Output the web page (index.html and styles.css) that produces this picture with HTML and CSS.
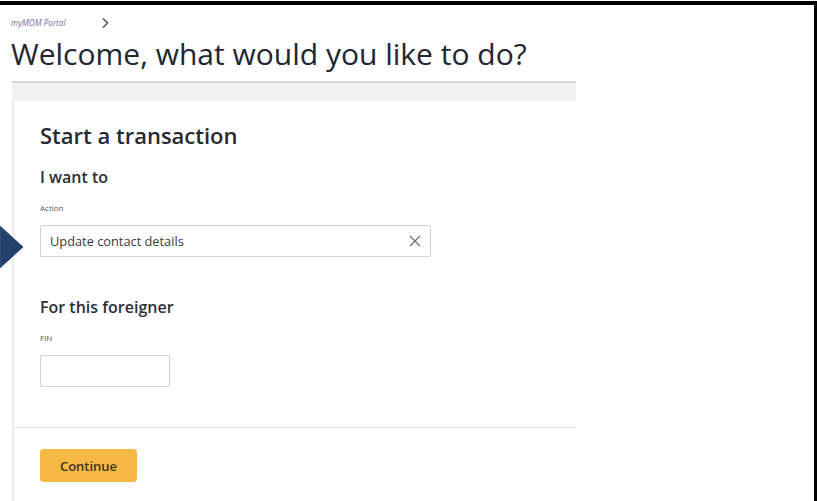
FILE: index.html
```html
<!DOCTYPE html>
<html lang="en">
<head>
<meta charset="utf-8">
<title>myMOM Portal</title>
<link rel="stylesheet" href="styles.css">
</head>
<body>
<div class="frame">
  <nav class="crumbs">
    <span class="crumb">myMOM Portal</span>
    <svg class="crumb-sep" width="8" height="12" viewBox="0 0 8 12"><path d="M2 1.5 L6.5 6 L2 10.5" fill="none" stroke="#444" stroke-width="1.3"/></svg>
  </nav>
  <h1 class="title">Welcome, what would you like to do?</h1>

  <section class="panel">
    <div class="card">
      <div class="card-body">
        <h2 class="card-title">Start a transaction</h2>

        <h3 class="group-title">I want to</h3>
        <label class="field-label">Action</label>
        <div class="select">
          <span class="select-value">Update contact details</span>
          <svg class="clear" width="12" height="12" viewBox="0 0 12 12"><path d="M1 1 L11 11 M11 1 L1 11" stroke="#6f6f6f" stroke-width="1.3"/></svg>
        </div>

        <h3 class="group-title group-gap">For this foreigner</h3>
        <label class="field-label">FIN</label>
        <div class="text-input"></div>
      </div>
      <div class="card-foot">
        <button class="btn-primary">Continue</button>
      </div>
    </div>
  </section>

  <svg class="pointer" width="24" height="46" viewBox="0 0 24 46"><polygon points="0,0 23,21 0,42" fill="#23406b" stroke="#3a5a88" stroke-width="1"/></svg>
</div>
</body>
</html>
```

FILE: styles.css
```css
* { box-sizing: border-box; }

html, body {
  margin: 0;
  padding: 0;
  background: #ffffff;
}

body {
  font-family: "Open Sans", "Noto Sans", sans-serif;
  color: #2b2b2b;
  padding-top: 1px;
  width: 817px;
  height: 501px;
  overflow: hidden;
}

.frame {
  position: relative;
  height: 500px;
  border-top: 4px solid #000;
  border-right: 3px solid #000;
  padding-left: 11px;
}

.crumbs {
  display: flex;
  align-items: center;
  gap: 35px;
  margin-top: 12px;
  height: 12px;
}

.crumb {
  font-size: 8.2px;
  font-style: italic;
  color: #7b6aa3;
  line-height: 12px;
}

.title {
  margin: 7px 0 9px;
  font-size: 30px;
  line-height: 36px;
  font-weight: 400;
  color: #212630;
}

.panel {
  margin-left: 1px;
  width: 564px;
  border-top: 2px solid #d8d8d8;
  background: #f2f2f2;
  padding-top: 18px;
}

.card {
  margin-left: 1px;
  background: #fff;
  border-left: 1px solid #e6e6e6;
  height: 400px;
}

.card-body {
  padding: 20px 26px 40px;
  border-bottom: 1px solid #dfe3ea;
}

.card-title {
  margin: 0;
  font-size: 22px;
  line-height: 28px;
  font-weight: 600;
  color: #262a30;
}

.group-title {
  margin: 18px 0 0;
  font-size: 16px;
  line-height: 20px;
  font-weight: 600;
  color: #2b2f35;
}

.group-gap { margin-top: 40px; }

.field-label {
  display: block;
  margin-top: 15px;
  font-size: 8px;
  line-height: 12px;
  color: #555;
}

.select {
  margin-top: 11px;
  width: 391px;
  height: 32px;
  border: 1px solid #d3d3d3;
  border-radius: 2px;
  display: flex;
  align-items: center;
  justify-content: space-between;
  padding: 0 9px 0 9px;
}

.select-value {
  font-size: 12.8px;
  color: #3a3a3a;
}

.text-input {
  margin-top: 11px;
  width: 130px;
  height: 32px;
  border: 1px solid #d3d3d3;
  border-radius: 2px;
}

.card-foot {
  padding: 21px 26px 0;
}

.btn-primary {
  width: 97px;
  height: 33px;
  border: none;
  border-radius: 4px;
  background: #f6b944;
  font-family: inherit;
  font-size: 13px;
  font-weight: 600;
  color: #3b3322;
  padding: 0;
}

.pointer {
  position: absolute;
  left: 0;
  top: 221px;
}
```
